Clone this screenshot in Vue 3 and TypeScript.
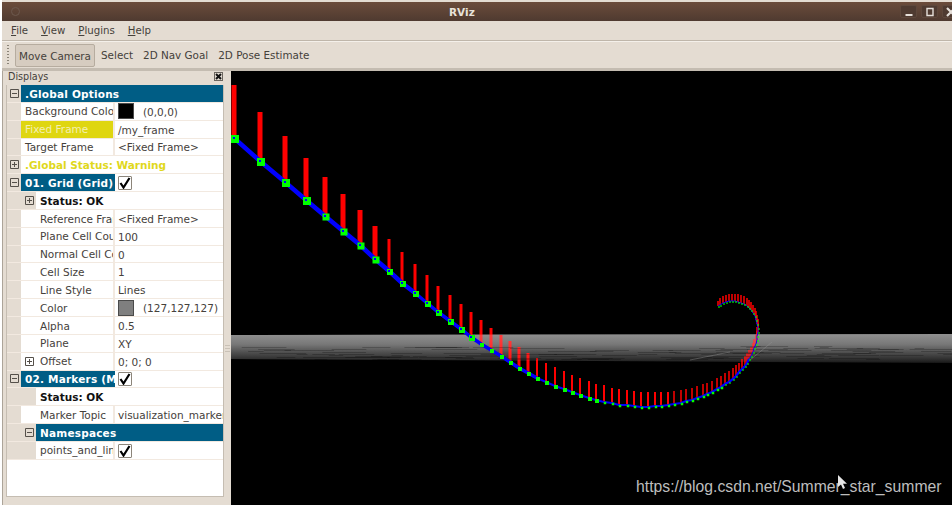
<script setup lang="ts">
import { computed } from 'vue'

type Row = {
  name: string
  value?: string
  depth: number
  kind?: 'head' | 'warn' | 'status' | 'sel'
  toggle?: '+' | '-'
  swatch?: string
  check?: boolean
}

const rows: Row[] = [
  { name: '.Global Options', depth: 0, kind: 'head', toggle: '-' },
  { name: 'Background Colo', value: '(0,0,0)', depth: 0, swatch: '#000' },
  { name: 'Fixed Frame', value: '/my_frame', depth: 0, kind: 'sel' },
  { name: 'Target Frame', value: '<Fixed Frame>', depth: 0 },
  { name: '.Global Status: Warning', depth: 0, kind: 'warn', toggle: '+' },
  { name: '01. Grid (Grid)', depth: 0, kind: 'head', toggle: '-', check: true },
  { name: 'Status: OK', depth: 1, kind: 'status', toggle: '+' },
  { name: 'Reference Fran', value: '<Fixed Frame>', depth: 1 },
  { name: 'Plane Cell Cou', value: '100', depth: 1 },
  { name: 'Normal Cell Cc', value: '0', depth: 1 },
  { name: 'Cell Size', value: '1', depth: 1 },
  { name: 'Line Style', value: 'Lines', depth: 1 },
  { name: 'Color', value: '(127,127,127)', depth: 1, swatch: '#7f7f7f' },
  { name: 'Alpha', value: '0.5', depth: 1 },
  { name: 'Plane', value: 'XY', depth: 1 },
  { name: 'Offset', value: '0; 0; 0', depth: 1, toggle: '+' },
  { name: '02. Markers (M', depth: 0, kind: 'head', toggle: '-', check: true },
  { name: 'Status: OK', depth: 1, kind: 'status' },
  { name: 'Marker Topic', value: 'visualization_marker', depth: 1 },
  { name: 'Namespaces', depth: 1, kind: 'head', toggle: '-' },
  { name: 'points_and_lin', depth: 1, check: true },
]

// x, y of each point on the line, y of the top of its red bar (page pixels)
const points: [number, number, number][] = [
  [234, 138, 85], [260, 161, 112], [285, 182, 136], [306, 200, 158], [325, 216, 177],
  [343, 231, 194], [360, 245, 210], [375, 259, 226], [389, 271, 239], [402, 283, 252],
  [415, 293, 264], [427, 303, 275], [438, 312, 286], [450, 321, 295], [461, 329, 304],
  [471, 337, 312], [481, 344, 320], [491, 350, 328], [501, 356, 335], [510, 362, 341],
  [519, 368, 347], [528, 373, 353], [537, 378, 358], [546, 382, 363], [555, 386, 367],
  [564, 389, 371], [572, 392, 375], [580, 395, 378], [589, 398, 381], [596, 400, 384],
  [604, 402, 385], [612, 403, 388], [619, 405, 389], [627, 405, 390], [634, 406, 391],
  [641, 407, 392], [648, 407, 392], [655, 406, 392], [661, 406, 392], [668, 405, 392],
  [674, 404, 391], [681, 403, 390], [686, 401, 389], [692, 400, 388], [697, 398, 386],
  [703, 396, 384], [707, 394, 383], [712, 392, 381], [717, 389, 378], [721, 387, 376],
  [725, 384, 373], [729, 382, 371], [733, 379, 368], [736, 376, 365], [739, 372, 363],
  [742, 369, 359], [745, 366, 356], [747, 363, 353], [749, 359, 350], [751, 356, 347],
  [753, 352, 343], [754, 348, 339], [756, 344, 335], [757, 340, 331], [757, 336, 327],
  [758, 332, 323], [758, 328, 319], [757, 324, 315], [756, 320, 311], [755, 316, 308],
  [753, 313, 305], [751, 310, 302], [749, 308, 300], [747, 306, 298], [744, 304, 296],
  [741, 303, 295], [738, 302, 294], [735, 301, 294], [732, 301, 294], [729, 301, 294],
  [726, 302, 295], [723, 303, 296], [720, 305, 298], [718, 306, 301],
]

// the view starts at x 231, y 71
const pts = points.map(([x, y, top], i) => ({
  x: x - 231,
  y: y - 71,
  top: top - 71,
  bar: i < 8 ? 5 : i < 22 ? 3 : i < 40 ? 2 : 1.5,
  dot: i < 4 ? 8 : i < 8 ? 7 : i < 16 ? 6 : i < 30 ? 4 : i < 50 ? 2.5 : 1.5,
  core: i < 16 ? 2 : 0,
}))

const toLine = (from: number, to: number) =>
  pts.slice(from, to + 1).map((p) => `${p.x},${p.y}`).join(' ')

const lines = [
  { points: toLine(0, 10), width: 4.5 },
  { points: toLine(10, 22), width: 3.5 },
  { points: toLine(22, 58), width: 2.2 },
  { points: toLine(58, pts.length - 1), width: 1 },
]

// the far end of the grid reads as broken dark dashes
const streaks = computed(() => {
  const out: { x: number; y: number; w: number }[] = []
  let seed = 17
  const next = () => {
    seed = (seed * 137 + 71) % 1009
    return seed / 1009
  }
  for (let i = 0; i < 110; i++) {
    out.push({ x: next() * 720, y: Math.round(275 + next() * 14), w: 8 + next() * 50 })
  }
  return out
})
</script>

<template>
  <div class="window">
    <header class="titlebar">
      <span class="dot"></span>
      <span class="title">RViz</span>
      <div class="winbtns">
        <span class="winbtn"><svg width="12" height="10" viewBox="0 0 12 10"><path d="M2.5 8h7" stroke="#e6e0da" stroke-width="2" /></svg></span>
        <span class="winbtn"><svg width="12" height="10" viewBox="0 0 12 10"><path d="M3 1.5h6v7H3z" fill="none" stroke="#e6e0da" stroke-width="1.4" /></svg></span>
        <span class="winbtn"><svg width="12" height="10" viewBox="0 0 12 10"><path d="M2 1l8 8M10 1l-8 8" stroke="#e6e0da" stroke-width="2.2" /></svg></span>
      </div>
    </header>

    <nav class="menubar">
      <span><u>F</u>ile</span>
      <span><u>V</u>iew</span>
      <span><u>P</u>lugins</span>
      <span><u>H</u>elp</span>
    </nav>

    <div class="toolbar">
      <span class="grip"></span>
      <button class="tool active">Move Camera</button>
      <button class="tool">Select</button>
      <button class="tool">2D Nav Goal</button>
      <button class="tool">2D Pose Estimate</button>
    </div>

    <main class="body">
      <aside class="panel">
        <div class="panel-head">
          <span>Displays</span>
          <span class="panel-close"><svg width="7" height="7" viewBox="0 0 7 7"><path d="M1 1l5 5M6 1l-5 5" stroke="#111" stroke-width="2" /></svg></span>
        </div>
        <div class="tree">
          <div
            v-for="(row, i) in rows"
            :key="i"
            class="row"
            :class="[row.kind, `depth-${row.depth}`, { filled: row.check }]"
          >
            <div class="gutter">
              <span v-if="row.toggle" class="toggle">
                <svg width="9" height="9" viewBox="0 0 9 9">
                  <path d="M0.5 0.5h8v8h-8z" fill="none" stroke="#55504a" />
                  <path :d="row.toggle === '+' ? 'M2 4.5h5M4.5 2v5' : 'M2 4.5h5'" stroke="#55504a" />
                </svg>
              </span>
            </div>
            <div class="name">{{ row.name }}</div>
            <div v-if="row.value || row.check" class="value">
              <span v-if="row.swatch" class="swatch" :style="{ background: row.swatch }"></span>
              <span v-if="row.check" class="check">
                <svg width="12" height="12" viewBox="0 0 12 12"><path d="M1.5 6l3 4.5L10.5 1" fill="none" stroke="#000" stroke-width="2.2" /></svg>
              </span>
              <span v-if="row.value" class="value-text">{{ row.value }}</span>
            </div>
          </div>
        </div>
      </aside>

      <div class="splitter"><span></span></div>

      <section class="view">
        <svg class="scene" width="721" height="434" viewBox="0 0 721 434">
          <defs>
            <linearGradient id="band" x1="0" y1="0" x2="0" y2="1">
              <stop offset="0" stop-color="#fff" stop-opacity="0.56" />
              <stop offset="0.35" stop-color="#fff" stop-opacity="0.45" />
              <stop offset="0.6" stop-color="#fff" stop-opacity="0.3" />
              <stop offset="0.85" stop-color="#fff" stop-opacity="0.17" />
              <stop offset="1" stop-color="#fff" stop-opacity="0.08" />
            </linearGradient>
          </defs>
          <polygon points="0,264 721,263 721,292 0,288" fill="url(#band)" opacity="0.75" />
          <rect v-for="(p, i) in pts" :key="i" :x="p.x - p.bar / 2" :y="p.top" :width="p.bar" :height="p.y - p.top" fill="#f00" />
          <polygon points="0,264 721,263 721,292 0,288" fill="url(#band)" opacity="0.45" />
          <rect v-for="(s, i) in streaks" :key="`s${i}`" :x="s.x" :y="s.y" :width="s.w" height="1" fill="#000" opacity="0.22" />
          <path d="M459 289L499 281M519 289L541 271" stroke="#999" stroke-opacity="0.4" fill="none" />
          <polyline v-for="(l, i) in lines" :key="`l${i}`" :points="l.points" fill="none" stroke="#00f" :stroke-width="l.width" />
          <rect v-for="(p, i) in pts" :key="`d${i}`" :x="p.x - p.dot / 2 + 1" :y="p.y - p.dot / 2 + 1" :width="p.dot" :height="p.dot" fill="#0f0" />
          <template v-for="(p, i) in pts" :key="`c${i}`">
            <rect v-if="p.core" :x="p.x - 1" :y="p.y - 1" :width="p.core" :height="p.core" fill="#00f" />
          </template>
        </svg>
        <span class="watermark">https://blog.csdn.net/Summer_star_summer</span>
        <svg class="cursor" width="10" height="15" viewBox="0 0 10 15">
          <path d="M1 0v12l3-2.6 2 4.6 2-.9-2-4.4h4z" fill="#e6e6e6" />
        </svg>
      </section>
    </main>
  </div>
</template>

<style>
html, body {
  margin: 0;
  background: #fff;
}
</style>

<style scoped>
.window {
  width: 952px;
  height: 505px;
  overflow: hidden;
  display: flex;
  flex-direction: column;
  padding-top: 2px;
  box-sizing: border-box;
  border-left: 2px solid #fff;
  background: #e4dcd2;
  background-clip: padding-box;
  font-family: "DejaVu Sans", sans-serif;
  font-size: 10.5px;
  color: #45413b;
}

.titlebar {
  height: 19px;
  flex: none;
  display: flex;
  align-items: center;
  position: relative;
  background: linear-gradient(#6b4c3b, #4f3a30);
}

.dot {
  width: 7px;
  height: 7px;
  margin-left: 9px;
  border-radius: 50%;
  border: 1px solid #6d594e;
}

.title {
  position: absolute;
  left: 447px;
  color: #e8e2da;
  font-weight: bold;
  font-size: 10.5px;
}

.winbtns {
  margin-left: auto;
  display: flex;
  gap: 4px;
  margin-right: -7px;
}

.winbtn {
  width: 17px;
  height: 13px;
  box-sizing: border-box;
  display: flex;
  align-items: center;
  justify-content: center;
  border: 1px solid #5e483c;
  border-radius: 2px;
  background: #4f3b31;
}

.menubar {
  height: 20px;
  flex: none;
  display: flex;
  gap: 13px;
  align-items: center;
  padding-left: 9px;
  border-bottom: 1px solid #bfb6aa;
  box-sizing: border-box;
  font-size: 10.2px;
}

.toolbar {
  height: 30px;
  flex: none;
  display: flex;
  align-items: center;
  padding-left: 5px;
  border-top: 1px solid #f4f0ea;
  border-bottom: 3px solid #c4bcb1;
  box-sizing: border-box;
  font-size: 10.4px;
}

.grip {
  width: 2px;
  height: 20px;
  margin-right: 6px;
  background: repeating-linear-gradient(#8b8478 0 1px, transparent 1px 3px);
}

.tool {
  height: 22px;
  border: 1px solid transparent;
  background: none;
  padding: 0 3px;
  margin: 0 2px 0 0;
  font: inherit;
  color: inherit;
}

.tool.active {
  width: 80px;
  height: 23px;
  padding: 2px 3px 0;
  margin-right: 2px;
  border-color: #b6ac9f;
  border-radius: 2px;
  background: #d6ccc0;
}

.body {
  flex: 1;
  min-height: 0;
  display: flex;
}

.panel {
  width: 222px;
  flex: none;
  display: flex;
  flex-direction: column;
  box-sizing: border-box;
  padding: 0 0 8px 4px;
  box-shadow: inset 1px 0 #aca499;
}

.panel-head {
  height: 14px;
  flex: none;
  display: flex;
  align-items: center;
  justify-content: space-between;
  padding: 0 1px 3px 2px;
  box-sizing: border-box;
  font-size: 9.6px;
}

.panel-close {
  width: 9px;
  height: 9px;
  box-sizing: border-box;
  display: flex;
  border: 1px solid #6a655e;
}

.tree {
  flex: 1;
  background: #fff;
  border: 1px solid #c5bdb2;
  border-top: none;
  box-sizing: border-box;
}

.row {
  height: 17.85px;
  display: flex;
  box-sizing: border-box;
  border-bottom: 1px solid #f2e9e0;
  line-height: 16px;
  white-space: nowrap;
}

.gutter {
  flex: none;
  box-sizing: border-box;
  display: flex;
  align-items: center;
  background: #e4dcd2;
}

.depth-0 .gutter {
  width: 14px;
  padding-left: 3px;
}

.depth-1 .gutter {
  width: 29px;
  padding-left: 18px;
  background: linear-gradient(90deg, #e4dcd2 14px, #fff 14px);
}

.depth-1.status .gutter,
.depth-1.head .gutter,
.depth-1.filled .gutter {
  background: #e4dcd2;
}

.toggle {
  display: flex;
}

.name {
  width: 94px;
  padding: 0.6px 0 0 4px;
  box-sizing: border-box;
  overflow: hidden;
  border-right: 2px solid #f2e9e0;
  flex: none;
}

.depth-1 .name {
  width: 79px;
}

.value {
  flex: 1;
  min-width: 0;
  display: flex;
  align-items: center;
  overflow: hidden;
  padding-left: 3px;
}

.value-text {
  white-space: nowrap;
  padding-top: 1px;
}

.swatch {
  width: 16px;
  height: 16px;
  flex: none;
  margin-right: 9px;
  box-shadow: inset 0 0 0 1px #4a4a4a;
}

.check {
  width: 14px;
  height: 14px;
  box-sizing: border-box;
  margin-top: 1px;
  display: flex;
  border: 1px solid #8c857a;
  border-radius: 1px;
  background: #fff;
}

.head .name {
  color: #fff;
  font-weight: bold;
  background: #005d85;
  border-right: none;
  letter-spacing: 0.2px;
}

.head:not(:has(.value)) .name {
  flex: 1;
}

.sel .name {
  background: #dfd610;
  color: #f3efb0;
}

.warn .name {
  flex: 1;
  color: #e0d81c;
  font-weight: bold;
  border-right: none;
}

.status .name {
  flex: 1;
  color: #111;
  font-weight: bold;
  border-right: none;
}

.splitter {
  width: 7px;
  flex: none;
  display: flex;
  justify-content: center;
  padding-top: 274px;
  box-sizing: border-box;
}

.splitter span {
  width: 5px;
  height: 8px;
  background: repeating-linear-gradient(#c9c1b6 0 1px, transparent 1px 3px);
}

.view {
  flex: 1;
  position: relative;
  background: #000;
  overflow: hidden;
}

.scene {
  display: block;
}

.watermark {
  position: absolute;
  left: 405px;
  top: 407px;
  font-family: "Liberation Sans", Arial, sans-serif;
  font-size: 15.75px;
  color: #bdbdbd;
  white-space: nowrap;
}

.cursor {
  position: absolute;
  left: 606px;
  top: 404px;
}
</style>
